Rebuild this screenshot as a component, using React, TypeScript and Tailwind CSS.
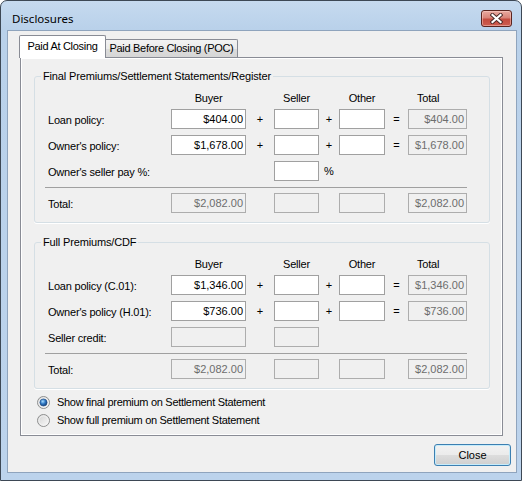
import React from "react";

type Cell = { value?: string; disabled?: boolean } | null;

function Field({ w, cell }: { w: string; cell: Cell }) {
  if (!cell) return <div className={`${w} shrink-0 h-[20px]`} />;
  return (
    <div
      className={`${w} shrink-0 h-[20px] border text-right pr-[2px] leading-[18px] whitespace-nowrap ${
        cell.disabled
          ? "border-[#adadad] bg-[#f0f0f0] text-[#6d6d6d]"
          : "border-[#a0a0a0] bg-white text-black"
      }`}
    >
      {cell.value ?? ""}
    </div>
  );
}

function Row({
  label,
  buyer,
  seller,
  other,
  total,
  op,
  pct,
}: {
  label: string;
  buyer: Cell;
  seller: Cell;
  other: Cell;
  total: Cell;
  op?: boolean;
  pct?: boolean;
}) {
  return (
    <div className="flex items-center h-[20px]">
      <div className="w-[123px] shrink-0 pt-[2px] leading-[13px] whitespace-nowrap tracking-[-0.2px]">{label}</div>
      <Field w="w-[75px]" cell={buyer} />
      <div className="w-[28px] shrink-0 text-center leading-[13px]">{op ? "+" : ""}</div>
      <Field w="w-[45px]" cell={seller} />
      {pct ? (
        <div className="w-[20px] shrink-0 pl-[5px] leading-[13px]">%</div>
      ) : (
        <div className="w-[20px] shrink-0 text-center leading-[13px]">{op ? "+" : ""}</div>
      )}
      <Field w="w-[46px]" cell={other} />
      <div className="w-[23px] shrink-0 text-center leading-[13px]">{op ? "=" : ""}</div>
      <Field w="w-[59px]" cell={total} />
    </div>
  );
}

function Header() {
  return (
    <div className="flex h-[13px] leading-[13px] tracking-[-0.2px]">
      <div className="w-[123px] shrink-0" />
      <div className="w-[75px] shrink-0 text-center">Buyer</div>
      <div className="w-[28px] shrink-0" />
      <div className="w-[45px] shrink-0 text-center">Seller</div>
      <div className="w-[20px] shrink-0" />
      <div className="w-[46px] shrink-0 text-center">Other</div>
      <div className="w-[23px] shrink-0" />
      <div className="w-[59px] shrink-0 pl-[9px]">Total</div>
    </div>
  );
}

function Group({
  title,
  className,
  rows,
  totalRow,
}: {
  title: string;
  className: string;
  rows: React.ReactNode;
  totalRow: React.ReactNode;
}) {
  return (
    <fieldset className={`${className} ml-[13px] w-[456px] border border-[#d5dfe5] rounded-[3px] shadow-[0_1px_0_#ffffff]`}>
      <legend className="ml-[6px] px-[2px] leading-[13px] whitespace-nowrap tracking-[-0.15px]">{title}</legend>
      <div className="pl-[13px] pt-[9px] pb-[9px]">
        <Header />
        <div className="mt-[4px] flex flex-col gap-[6px]">{rows}</div>
        <div className="ml-[-3px] w-[422px] h-px bg-[#a0a0a0] mt-[6px] mb-[5px]" />
        {totalRow}
      </div>
    </fieldset>
  );
}

function Radio({ checked }: { checked?: boolean }) {
  return (
    <svg width="13" height="13" viewBox="0 0 13 13" className="shrink-0">
      <defs>
        <linearGradient id={checked ? "rg1" : "rg2"} x1="0" y1="0" x2="1" y2="1">
          <stop offset="0" stopColor="#d2d2d2" />
          <stop offset="1" stopColor="#fbfbfb" />
        </linearGradient>
        <radialGradient id="rdot" cx="0.4" cy="0.35" r="0.7">
          <stop offset="0" stopColor="#a8dcff" />
          <stop offset="0.5" stopColor="#2f78c4" />
          <stop offset="1" stopColor="#143a70" />
        </radialGradient>
      </defs>
      <circle cx="6.5" cy="6.5" r="6" fill={checked ? "url(#rg1)" : "url(#rg2)"} stroke="#8e8f8f" strokeWidth="1" />
      <circle cx="6.5" cy="6.5" r="4.6" fill="none" stroke="#f4f4f4" strokeWidth="0.8" />
      {checked && <circle cx="6.5" cy="6.5" r="3.6" fill="url(#rdot)" stroke="#1c4a84" strokeWidth="0.6" />}
    </svg>
  );
}

export default function App() {
  return (
    <div className="w-[522px] h-[481px] flex flex-col border border-[#3d4855] rounded-t-[7px] bg-[linear-gradient(to_bottom,#c6daef_0px,#b9d1ea_28px,#bcd3ec_100%)] overflow-hidden [font-family:Liberation_Sans,Arial,sans-serif] text-[11px] text-black">
      {/* Title bar */}
      <div className="h-[29px] shrink-0 flex items-start justify-between pl-[11px] pr-[9px]">
        <div className="mt-[10px] leading-[16px] text-[11.5px] text-black [font-family:Noto_Sans,Open_Sans,sans-serif]">
          Disclosures
        </div>
        <div className="mt-[9px] w-[31px] h-[17px] rounded-[3px] border border-[#5a241f] bg-[linear-gradient(to_bottom,#e9aaa0_0%,#d98479_45%,#c44c3f_55%,#cd5d50_100%)] shadow-[inset_0_0_0_1px_rgba(255,220,210,0.45)] flex items-center justify-center">
          <svg width="13" height="11" viewBox="0 0 13 11">
            <path d="M2.5 2 L10.5 9 M10.5 2 L2.5 9" stroke="#4a2a28" strokeWidth="4" strokeLinecap="square" />
            <path d="M2.5 2 L10.5 9 M10.5 2 L2.5 9" stroke="#ffffff" strokeWidth="2.2" strokeLinecap="square" />
          </svg>
        </div>
      </div>

      {/* Client area */}
      <div className="ml-[6px] w-[510px] h-[443px] shrink-0 border border-[#8fa4bd] bg-[#f0f0f0] flex flex-col">
        {/* Tabs */}
        <div className="mt-[4px] ml-[11px] h-[22px] flex items-end">
          <div className="relative z-10 w-[87px] h-[23px] mb-[-1px] bg-white border border-b-0 border-[#898c95] rounded-t-[2px] text-center leading-[13px] pt-[4px] whitespace-nowrap tracking-[-0.3px]">
            Paid At Closing
          </div>
          <div className="w-[132px] h-[18px] border border-l-0 border-b-0 border-[#898c95] rounded-tr-[2px] bg-[linear-gradient(to_bottom,#f3f3f3_0%,#ebebeb_50%,#dddddd_50%,#d6d6d6_100%)] text-center leading-[13px] pt-[2px] whitespace-nowrap tracking-[-0.3px]">
            Paid Before Closing (POC)
          </div>
        </div>

        {/* Tab panel */}
        <div className="relative ml-[12px] w-[483px] h-[379px] shrink-0 border border-[#898c95] bg-[#f0f0f0] shadow-[inset_0_0_0_1px_#ffffff] flex flex-col">
          <Group
            title="Final Premiums/Settlement Statements/Register"
            className="mt-[12px]"
            rows={
              <>
                <Row
                  label="Loan policy:"
                  buyer={{ value: "$404.00" }}
                  seller={{}}
                  other={{}}
                  total={{ value: "$404.00", disabled: true }}
                  op
                />
                <Row
                  label="Owner's policy:"
                  buyer={{ value: "$1,678.00" }}
                  seller={{}}
                  other={{}}
                  total={{ value: "$1,678.00", disabled: true }}
                  op
                />
                <Row label="Owner's seller pay %:" buyer={null} seller={{}} other={null} total={null} pct />
              </>
            }
            totalRow={
              <Row
                label="Total:"
                buyer={{ value: "$2,082.00", disabled: true }}
                seller={{ disabled: true }}
                other={{ disabled: true }}
                total={{ value: "$2,082.00", disabled: true }}
              />
            }
          />

          <Group
            title="Full Premiums/CDF"
            className="mt-[13px]"
            rows={
              <>
                <Row
                  label="Loan policy (C.01):"
                  buyer={{ value: "$1,346.00" }}
                  seller={{}}
                  other={{}}
                  total={{ value: "$1,346.00", disabled: true }}
                  op
                />
                <Row
                  label="Owner's policy (H.01):"
                  buyer={{ value: "$736.00" }}
                  seller={{}}
                  other={{}}
                  total={{ value: "$736.00", disabled: true }}
                  op
                />
                <Row
                  label="Seller credit:"
                  buyer={{ disabled: true }}
                  seller={{ disabled: true }}
                  other={null}
                  total={null}
                />
              </>
            }
            totalRow={
              <Row
                label="Total:"
                buyer={{ value: "$2,082.00", disabled: true }}
                seller={{ disabled: true }}
                other={{ disabled: true }}
                total={{ value: "$2,082.00", disabled: true }}
              />
            }
          />

          <div className="mt-[7px] ml-[16px] flex flex-col gap-[5px] tracking-[-0.3px]">
            <div className="flex items-center h-[13px] gap-[7px]">
              <Radio checked />
              <span className="leading-[13px] whitespace-nowrap">Show final premium on Settlement Statement</span>
            </div>
            <div className="flex items-center h-[13px] gap-[7px]">
              <Radio />
              <span className="leading-[13px] whitespace-nowrap">Show full premium on Settlement Statement</span>
            </div>
          </div>
        </div>

        {/* Buttons */}
        <div className="mt-[8px] pr-[5px] flex justify-end">
          <div className="w-[77px] h-[22px] rounded-[3px] border border-[#3c7fb1] bg-[linear-gradient(to_bottom,#f2f2f2_0%,#ebebeb_50%,#dddddd_50%,#cfcfcf_100%)] shadow-[inset_0_0_0_1px_#c6ecfb] flex items-center justify-center leading-[13px]">
            Close
          </div>
        </div>
      </div>
    </div>
  );
}
